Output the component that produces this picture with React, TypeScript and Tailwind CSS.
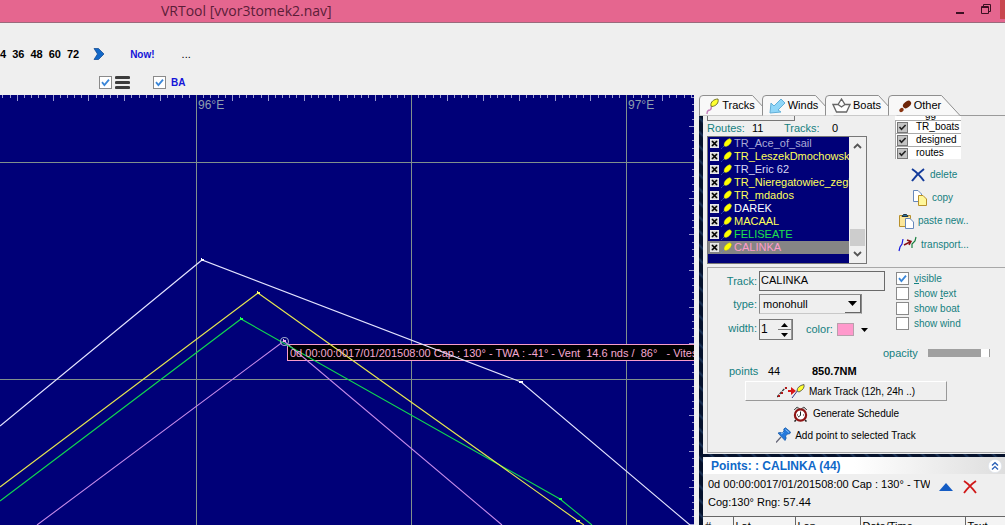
import React, { useState } from "react";
import clsx from "clsx";

const tracks = [
  { name: "TR_Ace_of_sail", color: "text-[#a9a9d6]" },
  { name: "TR_LeszekDmochowski", color: "text-[#ffff5a]" },
  { name: "TR_Eric 62", color: "text-[#d8d8f4]" },
  { name: "TR_Nieregatowiec_zeglarz", color: "text-[#ffff5a]" },
  { name: "TR_mdados", color: "text-[#ffff5a]" },
  { name: "DAREK", color: "text-white" },
  { name: "MACAAL", color: "text-[#ffff5a]" },
  { name: "FELISEATE", color: "text-[#1fe04c]" },
  { name: "CALINKA", color: "text-[#ff9ccc]" },
];

const layers = ["TR_boats", "designed", "routes"];

const columns = [
  { label: "#", width: "w-[30px]" },
  { label: "Lat", width: "w-[62px]" },
  { label: "Lon", width: "w-[65px]" },
  { label: "Date/Time", width: "w-[105px]" },
  { label: "Text", width: "w-[60px]" },
];

function Check({ id, defaultChecked = false }: { id: string; defaultChecked?: boolean }) {
  return (
    <span className="grid h-[13px] w-[13px] shrink-0">
      <input
        id={id}
        type="checkbox"
        aria-label={id}
        defaultChecked={defaultChecked}
        className="peer col-start-1 row-start-1 h-[13px] w-[13px] appearance-none border border-[#8a8a8a] bg-white"
      />
      <svg viewBox="0 0 13 13" className="pointer-events-none invisible col-start-1 row-start-1 peer-checked:visible">
        <path d="M3 6.2 5.4 9 10 3.6" fill="none" stroke="#3a86d8" strokeWidth="1.8" />
      </svg>
    </span>
  );
}

function LayerCheck({ id }: { id: string }) {
  return (
    <span className="grid h-[11px] w-[11px] shrink-0">
      <input
        id={id}
        type="checkbox"
        defaultChecked
        className="peer col-start-1 row-start-1 h-[11px] w-[11px] appearance-none border border-[#777] bg-[#c4c4c4]"
      />
      <svg viewBox="0 0 11 11" className="pointer-events-none invisible col-start-1 row-start-1 peer-checked:visible">
        <path d="M2.5 5 4.5 7.3 8.6 3" fill="none" stroke="#222" strokeWidth="1.6" />
      </svg>
    </span>
  );
}

function ListCheck({ id }: { id: string }) {
  return (
    <span className="grid h-[9px] w-[9px] shrink-0">
      <input
        id={id}
        type="checkbox"
        defaultChecked
        className="peer col-start-1 row-start-1 h-[9px] w-[9px] appearance-none border border-[#e8e8e8] bg-[#d4d4d4]"
      />
      <svg viewBox="0 0 9 9" className="pointer-events-none invisible col-start-1 row-start-1 peer-checked:visible">
        <path d="M2 2 7 7M7 2 2 7" stroke="#000" strokeWidth="1.7" />
      </svg>
    </span>
  );
}

function TrackMark({ className }: { className?: string }) {
  return (
    <svg viewBox="0 0 11 11" className={clsx("shrink-0", className)}>
      <path d="M.5 10.5 4 7" stroke="#5a8ae0" strokeDasharray="1 1" />
      <path d="M3.2 8C2.4 5.400 4.600 1.800 9 .6L10.600 2.200C10.400 5.400 7 8.600 4.200 8.500Z" fill="#ffff00" stroke="#9c9c2a" strokeWidth=".4" />
    </svg>
  );
}

function Chevrons() {
  return (
    <svg viewBox="0 0 14 14" className="h-[14px] w-[14px]">
      <circle cx="7" cy="7" r="6.6" fill="#fff" stroke="#dbe2ec" strokeWidth=".6" />
      <path d="M4 6.6 7 3.8 10 6.6M4 10.4 7 7.6 10 10.4" fill="none" stroke="#2c62b8" strokeWidth="1.4" />
    </svg>
  );
}

function Chart() {
  const topTicks = Array.from({ length: 97 }, (_, i) => i - 27);
  const sideTicks = Array.from({ length: 60 }, (_, i) => i - 9);

  return (
    <div className="relative min-w-0 flex-1 overflow-hidden bg-[#000078]">
      <svg viewBox="0 0 694 430" preserveAspectRatio="xMinYMin slice" className="absolute inset-0 h-full w-full">
        <g stroke="#9a9ad0" shapeRendering="crispEdges">
          {topTicks.map((i) => {
            const x = Math.round(196 + i * 7.17) + 0.5;
            return <line key={i} x1={x} x2={x} y1="0" y2={i % 5 === 0 ? 6 : 3} />;
          })}
          {sideTicks.map((i) => {
            const y = Math.round(67 + i * 7.23) + 0.5;
            return <line key={i} x1={i % 5 === 0 ? 689 : 692} x2="694" y1={y} y2={y} />;
          })}
        </g>
        <path
          d="M196.500 0V430M411.500 0V430M626.500 0V430M0 67.500H694M0 284.500H694"
          stroke="#80908c"
          shapeRendering="crispEdges"
        />
        <g fontFamily="Liberation Sans, sans-serif" fontSize="12" fill="#8f9fae">
          <text x="198" y="14">96°E</text>
          <text x="628" y="14">97°E</text>
        </g>
        <rect x="287.500" y="249.500" width="420" height="16" fill="#000" stroke="#f79ccb" />
        <g fill="none" strokeWidth="1.1">
          <path d="M37 430 284 246 502 430" stroke="#c58ae8" />
          <path d="M0 406 241 224 560 404 592 430" stroke="#10d850" />
          <path d="M0 392 258 198 578 426 584 430" stroke="#e6e650" />
          <path d="M0 331 202 165 521 287 690 430" stroke="#e4e4ff" />
          <circle cx="284.500" cy="246.500" r="4" stroke="#9aa4c8" />
        </g>
        <path d="M201 163h1v1h2v2h-3Z" fill="#fff" />
        <path d="M257 196h1v1h2v2h-3Z" fill="#ffff6a" />
        <path d="M240 222h1v1h2v2h-3Z" fill="#20ff50" />
        <path d="M283 244h1v1h2v2h-3Z" fill="#f0b0f0" />
        <path d="M519 286h4v2h-4Z" fill="#fff" />
        <path d="M559 403h3v2h-3Z" fill="#20ff50" />
        <path d="M576 425h4v2h-4Z" fill="#ffff6a" />
        <text
          x="290"
          y="262"
          fontFamily="Liberation Sans, sans-serif"
          fontSize="11"
          fill="#f5a8d2"
          xmlSpace="preserve"
        >
          {"0d 00:00:0017/01/201508:00 Cap : 130° - TWA : -41° - Vent  14.6 nds /  86°   - Vites"}
        </text>
      </svg>
    </div>
  );
}

function TabIcon({ name }: { name: string }) {
  if (name === "Tracks") {
    return (
      <svg viewBox="0 0 14 18" className="h-[18px] w-[14px]">
        <path d="M1 17Q1 13 4 13Q6 12 5 9" fill="none" stroke="#c07ab8" strokeWidth="1.3" />
        <path d="M5 9C4 5 8 2 12 2C13 6 10 9 6 9.500Z" fill="#ffff30" stroke="#77772a" />
      </svg>
    );
  }
  if (name === "Winds") {
    return (
      <svg viewBox="0 0 17 18" className="h-[18px] w-[17px]">
        <path d="M1 16 2 6 5 9 12 2 16 6 9 13 12 15Z" fill="#8fd6f8" stroke="#62afd8" />
      </svg>
    );
  }
  if (name === "Boats") {
    return (
      <svg viewBox="0 0 19 16" className="h-4 w-[19px]">
        <path d="M1 6.500H6L9.500 1 13 6.500H18L14.500 14H4.500ZM6 6.500 9.500 9 13 6.500" fill="#fff" stroke="#666" strokeWidth="1.300" />
      </svg>
    );
  }
  return (
    <svg viewBox="0 0 14 14" className="h-[14px] w-[14px]">
      <ellipse cx="9" cy="5.500" rx="4.600" ry="3" transform="rotate(-38 9 5.500)" fill="#6e2508" />
      <ellipse cx="3.500" cy="11" rx="2.400" ry="1.900" transform="rotate(-38 3.500 11)" fill="#8a3512" />
    </svg>
  );
}

function Tabs() {
  const [active, setActive] = useState("Tracks");
  return (
    <div role="tablist" className="flex h-[21px] shrink-0 border-b border-[#9a9a9a] bg-[#efefef]">
      {["Tracks", "Winds", "Boats", "Other"].map((tab) => (
        <button
          key={tab}
          role="tab"
          aria-selected={tab === active}
          onClick={() => setActive(tab)}
          className="relative h-[21px] w-[63px] shrink-0 text-[11px]"
        >
          <svg viewBox="0 0 74 21" className="absolute top-0 left-0 h-[21px] w-[74px]">
            <path d="M.5 20.500V4Q.5 .5 4 .5H53.500L72 20.500" fill="#f8f8f8" stroke="#8f8f8f" />
          </svg>
          <span className="relative flex h-full items-center justify-center gap-[2px]">
            <TabIcon name={tab} />
            {tab}
          </span>
        </button>
      ))}
    </div>
  );
}

function TrackList() {
  return (
    <div className="flex h-32 border border-[#777] bg-[#efefef]">
      <ul className="min-w-0 flex-1 overflow-hidden bg-[#000078]">
        {tracks.map((track) => (
          <li
            key={track.name}
            className={clsx("flex h-[13px] items-center gap-[2px] pl-[2px]", track.name === "CALINKA" && "bg-[#858585]")}
          >
            <ListCheck id={track.name} />
            <TrackMark className="h-[11px] w-[11px]" />
            <label htmlFor={track.name} className={clsx("text-[11px] leading-[13px] whitespace-nowrap", track.color)}>
              {track.name}
            </label>
          </li>
        ))}
      </ul>
      <div className="flex w-[17px] flex-col items-center bg-[#f0f0f0] py-[5px]">
        <svg viewBox="0 0 9 8" className="h-2 w-[9px]">
          <path d="M1 6 4.500 2.500 8 6" fill="none" stroke="#555" strokeWidth="1.800" />
        </svg>
        <div className="mt-auto h-[17px] w-[15px] bg-[#cdcdcd]" />
        <svg viewBox="0 0 9 8" className="mt-1 h-2 w-[9px]">
          <path d="M1 2 4.500 5.500 8 2" fill="none" stroke="#555" strokeWidth="1.800" />
        </svg>
      </div>
    </div>
  );
}

function Actions() {
  return (
    <div className="mt-1 flex flex-col text-[10px] text-[#158080]">
      <button className="flex h-[23px] items-center gap-[5px] pl-4">
        <svg viewBox="0 0 14 14" className="h-[14px] w-[14px]">
          <path d="M1 1Q7 5 13 13M13 1Q6 6 1 13" fill="none" stroke="#123a9a" strokeWidth="2" />
        </svg>
        delete
      </button>
      <button className="flex h-[23px] items-center gap-[5px] pl-[17px]">
        <svg viewBox="0 0 15 16" className="h-4 w-[15px]">
          <path d="M1.500.5H6L9.500 4V11.500H1.500Z" fill="#fff" stroke="#6688bb" />
          <path d="M6.500 5.500H11L14.500 9V15.500H6.500Z" fill="#fff79a" stroke="#b8902a" />
        </svg>
        copy
      </button>
      <button className="flex h-[23px] items-center gap-1 pl-1">
        <svg viewBox="0 0 15 16" className="h-4 w-[15px]">
          <path d="M.5 2.500H11.500V13.500H.5Z" fill="#fbe69a" stroke="#b8902a" />
          <path d="M3 3.500 4.500 1.500H7.500L9 3.500Z" fill="#287a9e" stroke="#234" />
          <path d="M6.500 5.500H11L14.500 9V15.500H6.500Z" fill="#fff" stroke="#6688bb" />
        </svg>
        paste new..
      </button>
      <button className="flex h-6 items-center gap-1 pl-[3px]">
        <svg viewBox="0 0 19 16" className="h-4 w-[19px]">
          <path d="M1 15 2 11 4 8 5 3" fill="none" stroke="#1a1ae0" strokeWidth="1.200" />
          <path d="M14 12V8L17 5 18 1" fill="none" stroke="#188040" strokeWidth="1.200" />
          <path d="M6 9 12 6M9 4 13 5.500 11 9" fill="none" stroke="#8a1018" strokeWidth="1.500" />
        </svg>
        transport...
      </button>
    </div>
  );
}

function TrackForm() {
  return (
    <section className="mt-[3px] h-[186px] border-y border-l border-[#a8a8a8] pt-[3px]">
      <div className="flex">
        <div className="grid w-[188px] grid-cols-[49px_1fr] gap-x-[2px] gap-y-[3px] text-[11px] text-[#158080]">
          <label htmlFor="track" className="self-center text-right">
            Track:
          </label>
          <input
            id="track"
            defaultValue="CALINKA"
            className="h-5 w-[126px] border border-[#6a6a6a] bg-[#efefef] px-[1px] pb-[2px] text-[11px] text-black"
          />
          <label htmlFor="type" className="self-center text-right">
            type:
          </label>
          <div className="grid h-5 w-[103px] border border-[#8a8a8a] border-b-[#c8c8c8]">
            <select
              id="type"
              className="col-start-1 row-start-1 appearance-none px-[3px] text-[11px] text-black"
              defaultValue="monohull"
            >
              <option>monohull</option>
              <option>multihull</option>
            </select>
            <span className="pointer-events-none col-start-1 row-start-1 flex w-4 items-center justify-center justify-self-end border-r border-b border-[#666] bg-[#efefef]">
              <svg viewBox="0 0 9 5" className="h-[5px] w-[9px]">
                <path d="M0 0H9L4.500 5Z" />
              </svg>
            </span>
          </div>
          <label htmlFor="width" className="self-center text-right">
            width:
          </label>
          <div className="mt-[2px] flex items-center">
            <div className="flex h-[21px] w-[34px] border border-[#777]">
              <input id="width" defaultValue="1" className="w-[18px] min-w-0 px-[1px] pb-[2px] text-xs text-black" />
              <div className="flex flex-1 flex-col border-r border-[#999]">
                <button aria-label="Increase" className="flex flex-1 items-center justify-center border-b border-[#777]">
                  <svg viewBox="0 0 7 4" className="h-1 w-[7px]">
                    <path d="M0 4H7L3.500 0Z" />
                  </svg>
                </button>
                <button aria-label="Decrease" className="flex flex-1 items-center justify-center">
                  <svg viewBox="0 0 7 4" className="h-1 w-[7px]">
                    <path d="M0 0H7L3.500 4Z" />
                  </svg>
                </button>
              </div>
            </div>
            <span className="ml-[13px]">color:</span>
            <button aria-label="Track color" className="ml-1 flex items-center gap-[7px]">
              <span className="h-[13px] w-[17px] border border-[#b8a0ac] bg-[#ff99cc]" />
              <svg viewBox="0 0 7 4" className="h-1 w-[7px]">
                <path d="M0 0H7L3.500 4Z" />
              </svg>
            </button>
          </div>
        </div>
        <div className="flex flex-col text-[10px] text-[#158080]">
          {[
            ["visible", "v", "isible", ""],
            ["show text", "t", "ext", "show "],
            ["show boat", "", "show boat", ""],
            ["show wind", "", "show wind", ""],
          ].map(([name, key, rest, before]) => (
            <div key={name} className="flex h-[15px] items-center gap-[5px]">
              <Check id={name} defaultChecked={name === "visible"} />
              <label htmlFor={name} className="whitespace-pre">
                {before}
                <u>{key}</u>
                {rest}
              </label>
            </div>
          ))}
        </div>
      </div>

      <div className="mt-[5px] flex h-4 items-center gap-[10px] pl-[175px] text-[11px] text-[#158080]">
        <label htmlFor="opacity">opacity</label>
        <input
          id="opacity"
          type="range"
          defaultValue={100}
          className="h-2 w-[62px] appearance-none border-r border-[#999] bg-[#a0a0a0] [&::-webkit-slider-thumb]:h-2 [&::-webkit-slider-thumb]:w-2 [&::-webkit-slider-thumb]:appearance-none [&::-webkit-slider-thumb]:bg-white"
        />
      </div>
      <div className="mt-[2px] flex h-4 items-center text-[11px]">
        <span className="w-[60px] pl-[21px] text-[#158080]">points</span>
        <span className="w-11">44</span>
        <strong>850.7NM</strong>
      </div>
      <div className="mt-[2px] flex w-[276px] flex-col items-center text-[10px]">
        <button className="flex h-5 w-[202px] items-center justify-center gap-1 border border-t-white border-r-[#999] border-b-[#999] border-l-white">
          <svg viewBox="0 0 28 14" className="h-[14px] w-7">
            <path d="M0 13 8 4" stroke="#333" strokeWidth="1.200" strokeDasharray="3 1" />
            <path d="M1 11h2v2H1ZM4 8h2v2H4ZM8 3h2v2H8Z" fill="#b01818" />
            <path d="M11 6h3V3l5 4-5 4V8h-3Z" fill="#d81818" />
            <path d="M15 14 21 6" stroke="#338" />
            <path d="M20 7Q20 2 27 .5Q28 5 22 8Z" fill="#ffff30" stroke="#444" strokeWidth=".8" />
          </svg>
          Mark Track (12h, 24h ..)
        </button>
        <button className="mt-[2px] flex h-[21px] items-center gap-[5px]">
          <svg viewBox="0 0 15 16" className="h-4 w-[15px]">
            <path d="M1 4 4 1 7 3M14 4 11 1 8 3" fill="#b8b8b8" stroke="#555" />
            <path d="M3 14 1.500 15.500M12 14 13.500 15.500" stroke="#222" strokeWidth="1.500" />
            <circle cx="7.500" cy="9" r="5.600" fill="#fff" stroke="#8e1414" strokeWidth="2.200" />
            <path d="M7.500 5.500V9.500L5 11M4 9h1M10 9h1" fill="none" stroke="#222" />
          </svg>
          Generate Schedule
        </button>
        <button className="flex h-[22px] items-center gap-1">
          <svg viewBox="0 0 15 16" className="h-4 w-[15px]">
            <path d="M0 15.500 5 10" stroke="#667" strokeWidth="1.200" />
            <path d="M2 6Q4 5 6 6L8 4Q7 1.500 9.500 .8L14.500 5Q14.500 7.500 11.500 7L9.500 9Q11 11 9 13.500Z" fill="#2479dc" stroke="#1b5ca8" strokeWidth=".8" />
            <path d="M9.500 2.500 13 5.500M5 7 7.500 5.500" stroke="#8cc4f6" />
          </svg>
          Add point to selected Track
        </button>
      </div>
    </section>
  );
}

function PointsPanel() {
  return (
    <section className="mt-[3px] flex flex-1 flex-col bg-[#efefef]">
      <header className="flex h-[17px] shrink-0 items-center justify-between rounded-tl bg-gradient-to-r from-white via-white to-[#dedede] pr-[3px] pl-2">
        <h2 className="text-xs font-bold whitespace-pre text-[#0f68c8]">Points: : CALINKA (44)</h2>
        <button aria-label="Collapse points">
          <Chevrons />
        </button>
      </header>
      <div className="flex h-[42px] shrink-0 pt-[1px] pl-[5px] text-[11px] leading-[18px]">
        <div className="w-[222px] overflow-hidden whitespace-nowrap">
          <p>0d 00:00:0017/01/201508:00 Cap : 130° - TW</p>
          <p>Cog:130° Rng: 57.44</p>
        </div>
        <button aria-label="Move up" className="ml-[9px] flex h-6 items-center">
          <svg viewBox="0 0 14 8" className="h-2 w-[14px]">
            <path d="M0 8 7 0 14 8Z" fill="#145cc4" />
          </svg>
        </button>
        <button aria-label="Delete point" className="ml-[10px] flex h-6 items-center">
          <svg viewBox="0 0 14 14" className="h-[14px] w-[14px]">
            <path d="M1 1Q7 5 13 13M13 1Q7 5 1 13" fill="none" stroke="#d01818" strokeWidth="1.800" />
          </svg>
        </button>
      </div>
      <table className="w-[322px] table-fixed border-collapse border-t border-[#666] bg-[#f4f4f4] text-[11px]">
        <thead>
          <tr>
            {columns.map((column) => (
              <th
                key={column.label}
                className={clsx(
                  "h-[18px] border-l border-[#666] px-[2px] py-0 text-left leading-[18px] font-normal first:border-l-0",
                  column.width,
                )}
              >
                {column.label}
              </th>
            ))}
          </tr>
        </thead>
      </table>
    </section>
  );
}

function SidePanel() {
  return (
    <aside className="ml-[5px] flex w-[306px] shrink-0 flex-col overflow-hidden">
      <Tabs />
      <div className="flex min-h-0 flex-1 flex-col bg-[repeating-linear-gradient(45deg,#06122c_0px,#06122c_6px,#1c3458_8px,#06122c_10px)] pl-1">
        <div className="h-[338px] shrink-0 bg-[#efefef] pl-1">
          <div className="flex">
            <div className="w-40">
              <div className="h-[5px] w-[88px] border border-t-0 border-[#777]" />
              <div className="flex h-[15px] items-center text-[11px]">
                <span className="w-[45px] text-[#158080]">Routes:</span>
                <span className="w-8">11</span>
                <span className="w-12 text-[#158080]">Tracks:</span>
                <span>0</span>
              </div>
              <TrackList />
            </div>
            <div className="ml-7">
              <div className="flex h-1 w-[66px] items-end overflow-hidden bg-white pl-[30px] text-[10px] leading-[10px]">
                gg
              </div>
              {layers.map((layer) => (
                <div
                  key={layer}
                  className="flex h-[13px] w-[66px] items-center border-t border-l border-[#aaa] bg-white pl-[1px]"
                >
                  <LayerCheck id={layer} />
                  <label htmlFor={layer} className="pl-2 text-[10px] leading-3">
                    {layer}
                  </label>
                </div>
              ))}
              <Actions />
            </div>
          </div>
          <TrackForm />
        </div>
        <PointsPanel />
      </div>
    </aside>
  );
}

export default function App() {
  return (
    <div className="flex h-screen flex-col overflow-hidden bg-[#efefef] font-['Liberation_Sans',sans-serif] text-black">
      <header className="flex h-[23px] shrink-0 items-center border-b border-[#9a6a7c] bg-[#e5668f] pl-[161px] text-[#5b1d38]">
        <h1 className="font-['Open_Sans',sans-serif] text-sm">VRTool [vvor3tomek2.nav]</h1>
        <div className="ml-auto flex h-full items-center text-[#3c1022]">
          <button aria-label="Minimize" className="mr-[17px]">
            <svg viewBox="0 0 8 10" className="h-[10px] w-2">
              <path d="M0 6h8v2H0Z" fill="currentColor" />
            </svg>
          </button>
          <button aria-label="Restore" className="mr-[9px] mb-1">
            <svg viewBox="0 0 10 10" className="h-[10px] w-[10px]">
              <path d="M2.500 2V.5H9.500V7.500H8M.5 2.500H7.500V9.500H.5ZM.5 3.500H7.500" fill="none" stroke="currentColor" />
            </svg>
          </button>
          <button aria-label="Close" className="h-[19px] w-[5px] self-start bg-[#c9474f]" />
        </div>
      </header>

      <div className="flex h-[72px] shrink-0 flex-col pt-[21px] text-[11px] font-bold">
        <div className="flex h-5 items-center">
          <div className="flex gap-[6px]">
            {["4", "36", "48", "60", "72"].map((hours) => (
              <button key={hours}>{hours}</button>
            ))}
          </div>
          <button aria-label="Next" className="ml-[14px]">
            <svg viewBox="0 0 12 12" className="h-3 w-3">
              <path d="M1 .5H5.500L11 6 5.500 11.500H1L4.500 6Z" fill="#1268c8" stroke="#0b448c" strokeWidth=".7" />
            </svg>
          </button>
          <button className="ml-[25px] text-[10px] text-[#1414d8]">Now!</button>
          <button className="ml-[27px] font-normal">...</button>
        </div>
        <div className="mt-2 flex h-5 items-center pl-[99px]">
          <Check id="layers" defaultChecked />
          <svg viewBox="0 0 15 15" className="ml-[3px] h-[15px] w-[15px]">
            <path d="M1.500 2.500h12M1.500 7.500h12M1.500 12.500h12" stroke="#3c3c3c" strokeWidth="3.200" strokeLinecap="round" />
          </svg>
          <span className="ml-[23px] flex items-center gap-[5px]">
            <Check id="BA" defaultChecked />
            <label htmlFor="BA" className="text-[10px] text-[#1414d8]">
              BA
            </label>
          </span>
        </div>
      </div>

      <main className="flex min-h-0 flex-1">
        <Chart />
        <SidePanel />
      </main>
    </div>
  );
}
